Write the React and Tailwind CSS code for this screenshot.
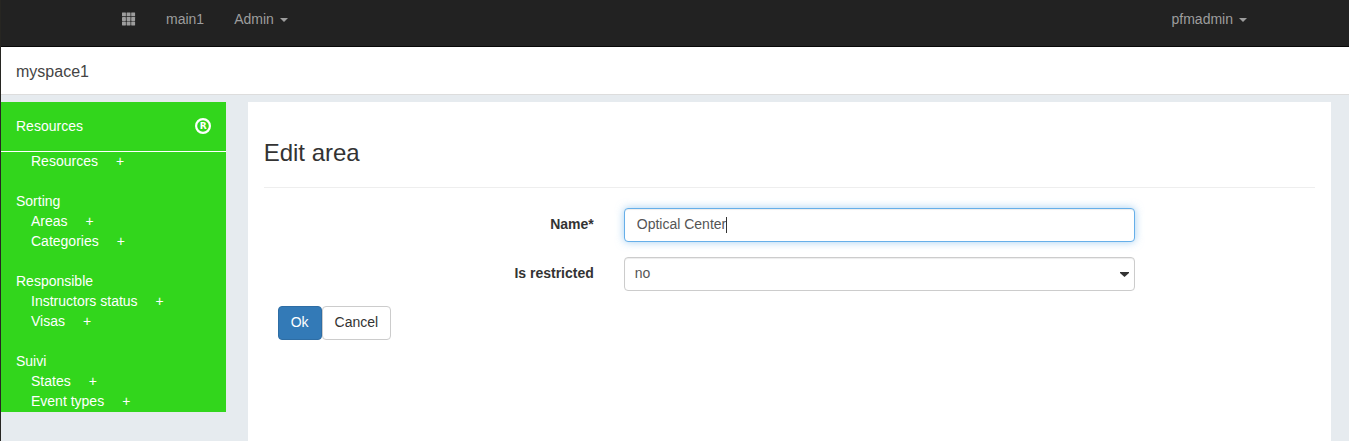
import React from "react";

const groups = [
  { title: null, items: ["Resources"] },
  { title: "Sorting", items: ["Areas", "Categories"] },
  { title: "Responsible", items: ["Instructors status", "Visas"] },
  { title: "Suivi", items: ["States", "Event types"] },
];

function Caret() {
  return (
    <svg className="mt-px ml-1.5 h-1 w-2" viewBox="0 0 8 4" fill="currentColor" aria-hidden="true">
      <path d="M0 0h8L4 4z" />
    </svg>
  );
}

function GridIcon() {
  return (
    <svg className="h-3.5 w-3.5" viewBox="0 0 14 14" fill="currentColor" aria-hidden="true">
      {[0.4, 5, 9.6].map((y) =>
        [0, 4.6, 9.2].map((x) => (
          <rect key={`${x}-${y}`} x={x} y={y} width="3.9" height="3.9" rx="0.4" />
        ))
      )}
    </svg>
  );
}

function RegistrationIcon() {
  return (
    <svg className="h-4 w-4" viewBox="0 0 16 16" aria-hidden="true">
      <circle cx="8" cy="8" r="6.9" fill="none" stroke="currentColor" strokeWidth="2.2" />
      <text x="8.3" y="11" textAnchor="middle" fill="currentColor" className="font-['DejaVu_Sans'] text-[9px] font-bold">
        R
      </text>
    </svg>
  );
}

function Navbar() {
  return (
    <nav className="flex h-[47px] items-start justify-between border-b border-[#080808] bg-[#222] pt-[9px] pr-[87px] pl-[106px] text-[#9d9d9d]">
      <div className="flex">
        <a href="#apps" aria-label="Applications" className="flex h-5 items-center px-[15px]">
          <GridIcon />
        </a>
        <a href="#main1" className="px-[15px]">main1</a>
        <button type="button" className="flex items-center px-[15px]">
          Admin
          <Caret />
        </button>
      </div>
      <button type="button" className="flex items-center px-[15px]">
        pfmadmin
        <Caret />
      </button>
    </nav>
  );
}

function Sidebar() {
  return (
    <aside className="w-1/6 shrink-0 self-start bg-[#32d61c] text-white">
      <div className="flex h-[50px] items-center justify-between border-b border-white px-[15px] pb-0.5">
        <a href="#resources">Resources</a>
        <RegistrationIcon />
      </div>
      <div className="-mt-px flex flex-col gap-5 pb-px">
        {groups.map((group) => (
          <section key={group.items[0]} className="px-[15px]">
            {group.title && <h2>{group.title}</h2>}
            <ul className="pl-[15px]">
              {group.items.map((item) => (
                <li key={item} className="flex gap-[18px]">
                  <a href="#list">{item}</a>
                  <a href="#new" aria-label={`Add ${item}`}>+</a>
                </li>
              ))}
            </ul>
          </section>
        ))}
      </div>
    </aside>
  );
}

function EditForm() {
  return (
    <form className="flex flex-col gap-[15px]" onSubmit={(e) => e.preventDefault()}>
      <div className="grid grid-cols-12">
        <label htmlFor="name" className="col-span-4 px-[15px] pt-[6px] text-right font-bold">
          Name*
        </label>
        <div className="relative col-span-6 mx-[15px]">
          <input
            id="name"
            type="text"
            defaultValue="Optical Center"
            className="block h-[34px] w-full rounded border border-[#66afe9] bg-white px-3 pb-0.5 text-[#555] shadow-[inset_0_1px_1px_rgba(0,0,0,0.075),0_0_8px_rgba(102,175,233,0.6)] outline-none"
          />
          <span className="absolute top-[9px] left-[102px] h-4 w-px bg-[#333]" />
        </div>
      </div>
      <div className="grid grid-cols-12">
        <label htmlFor="restricted" className="col-span-4 px-[15px] pt-[6px] text-right font-bold">
          Is restricted
        </label>
        <div className="relative col-span-6 mx-[15px]">
          <select
            id="restricted"
            defaultValue="no"
            className="block h-[34px] w-full appearance-none rounded border border-[#ccc] bg-white px-2.5 pb-0.5 text-[#555] shadow-[inset_0_1px_1px_rgba(0,0,0,0.075)] outline-none"
          >
            <option value="no">no</option>
            <option value="yes">yes</option>
          </select>
          <svg className="pointer-events-none absolute top-[15px] right-1.5 h-[5px] w-[9px] text-[#333]" viewBox="0 0 9 5" fill="currentColor" aria-hidden="true">
            <path d="M0 0h9v1L4.5 5 0 1z" />
          </svg>
        </div>
      </div>
      <div className="flex px-[30px]">
        <button type="submit" className="h-[34px] rounded border border-[#2e6da4] bg-[#337ab7] px-3 pb-0.5 text-white">
          Ok
        </button>
        <button type="button" className="h-[34px] rounded border border-[#ccc] bg-white px-3 pb-0.5 text-[#333]">
          Cancel
        </button>
      </div>
    </form>
  );
}

export default function App() {
  return (
    <div className="flex min-h-screen flex-col border-l border-[#272622] bg-[#e6ebef] font-['Liberation_Sans',Arial,sans-serif] text-sm leading-5 text-[#333]">
      <Navbar />
      <header className="flex h-12 items-center border-b border-[#ddd] bg-white px-[15px] pt-0.5 text-base text-[#444]">
        <span>myspace1</span>
      </header>
      <div className="flex grow pt-[7px]">
        <Sidebar />
        <main className="mr-[18px] ml-[22px] grow bg-white pt-9">
          <div className="mx-4 mb-5 border-b border-[#eee] pb-[19px]">
            <h1 className="text-2xl leading-[30px]">Edit area</h1>
          </div>
          <EditForm />
        </main>
      </div>
    </div>
  );
}
